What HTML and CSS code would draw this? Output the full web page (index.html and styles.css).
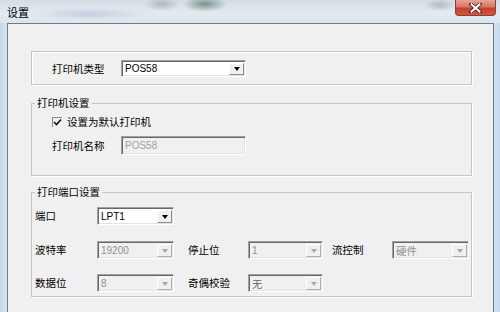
FILE: index.html
```html
<!DOCTYPE html>
<html lang="zh-CN">
<head>
<meta charset="utf-8">
<title>设置</title>
<link rel="stylesheet" href="styles.css">
</head>
<body>
<div class="window">
  <div class="titlebar">
    <div class="title">设置</div>
    <div class="close">
      <svg width="13" height="10" viewBox="0 0 13 10"><path d="M2 1 L11 9 M11 1 L2 9" stroke="#3a2a2a" stroke-width="3.6" stroke-linecap="square"/><path d="M2.5 1.5 L10.5 8.5 M10.5 1.5 L2.5 8.5" stroke="#ffffff" stroke-width="2" stroke-linecap="square"/></svg>
    </div>
  </div>
  <div class="client">
    <div class="group1">
      <span class="lbl w69">打印机类型</span>
      <div class="combo w125">
        <span class="val">POS58</span>
        <span class="btn"><i class="arrow"></i></span>
      </div>
    </div>

    <fieldset class="group g2">
      <legend>打印机设置</legend>
      <div class="row ind check-row">
        <span class="checkbox"><svg width="9" height="9" viewBox="0 0 9 9"><path d="M1 4 L3.5 6.5 L8 1.5" fill="none" stroke="#111" stroke-width="1.6"/></svg></span>
        <span class="lbl">设置为默认打印机</span>
      </div>
      <div class="row ind name-row">
        <span class="lbl w69">打印机名称</span>
        <div class="textbox w125 disabled"><span class="val">POS58</span></div>
      </div>
    </fieldset>

    <fieldset class="group g3">
      <legend>打印端口设置</legend>
      <div class="row r1">
        <span class="lbl w62">端口</span>
        <div class="combo w77">
          <span class="val">LPT1</span>
          <span class="btn"><i class="arrow"></i></span>
        </div>
      </div>
      <div class="row r2">
        <span class="lbl w62">波特率</span>
        <div class="combo w77 disabled">
          <span class="val">19200</span>
          <span class="btn"><i class="arrow"></i></span>
        </div>
        <span class="lbl w60 gap14">停止位</span>
        <div class="combo w75 disabled">
          <span class="val">1</span>
          <span class="btn"><i class="arrow"></i></span>
        </div>
        <span class="lbl w60 gap9">流控制</span>
        <div class="combo w77 disabled">
          <span class="val cjk">硬件</span>
          <span class="btn"><i class="arrow"></i></span>
        </div>
      </div>
      <div class="row r3">
        <span class="lbl w62">数据位</span>
        <div class="combo w77 disabled">
          <span class="val">8</span>
          <span class="btn"><i class="arrow"></i></span>
        </div>
        <span class="lbl w60 gap14">奇偶校验</span>
        <div class="combo w75 disabled">
          <span class="val cjk dark">无</span>
          <span class="btn"><i class="arrow"></i></span>
        </div>
      </div>
    </fieldset>
  </div>
</div>
</body>
</html>
```

FILE: styles.css
```css
html, body {
  margin: 0;
  padding: 0;
}
body {
  width: 500px;
  height: 312px;
  overflow: hidden;
  font-family: "Noto Sans CJK SC", "DejaVu Sans", sans-serif;
  font-size: 10.5px;
  color: #000;
}
.window {
  height: 312px;
  display: flex;
  flex-direction: column;
  background: linear-gradient(to right, #c4d8ec 0, #d6e4f1 7px, #d6e4f1 493px, #c4d8ec 500px);
}
.titlebar {
  height: 23px;
  flex: none;
  display: flex;
  justify-content: space-between;
  align-items: flex-start;
  background:
    radial-gradient(ellipse 22px 8px at 205px 4px, rgba(40,80,60,0.55), rgba(40,80,60,0)),
    radial-gradient(ellipse 18px 7px at 162px 4px, rgba(90,110,110,0.35), rgba(90,110,110,0)),
    radial-gradient(ellipse 60px 6px at 90px 14px, rgba(140,160,190,0.35), rgba(140,160,190,0)),
    radial-gradient(ellipse 16px 6px at 440px 5px, rgba(100,120,120,0.35), rgba(100,120,120,0)),
    linear-gradient(#d5dde4, #e3eaf0 60%, #dbe5ee);
}
.title {
  font-size: 11px;
  line-height: 14px;
  padding: 5px 0 0 7px;
  color: #000;
}
.close {
  width: 41px;
  height: 16px;
  margin-right: 4px;
  box-sizing: border-box;
  border: 1px solid #8e3b30;
  border-top: none;
  border-radius: 0 0 4px 4px;
  background: linear-gradient(#e7a394 0, #d77565 45%, #c2402f 55%, #d2573f 100%);
  display: flex;
  align-items: center;
  justify-content: center;
  padding-top: 1px;
}
.client {
  flex: 1;
  margin: 0 6px 0 7px;
  border: 1px solid #6c7b8a;
  border-bottom: none;
  background: #f0f0f0;
  padding: 27px 0 0 23px;
}
.group1 {
  width: 441px;
  box-sizing: border-box;
  border: 1px solid #c3c6c9;
  box-shadow: 1px 1px 0 #fff, inset 1px 1px 0 #fff;
  padding: 8px 0 7px 20px;
  display: flex;
  align-items: center;
}
.group {
  width: 441px;
  box-sizing: border-box;
  margin: 0;
  min-inline-size: 0;
  border: 1px solid #c3c6c9;
  box-shadow: 1px 1px 0 #fff;
  padding: 0 0 0 3px;
}
.group legend {
  padding: 0 2px;
  line-height: 14px;
  font-size: 10.5px;
}
.g2 {
  margin-top: 11px;
  padding-top: 4px;
  padding-bottom: 20px;
}
.g3 {
  margin-top: 9px;
  padding-top: 8px;
  padding-bottom: 4px;
}
.row {
  display: flex;
  align-items: center;
}
.ind {
  margin-left: 17px;
}
.check-row {
  height: 16px;
}
.name-row {
  margin-top: 6px;
}
.r2 {
  margin-top: 16px;
}
.r3 {
  margin-top: 15px;
}
.lbl {
  white-space: nowrap;
  line-height: 14px;
  flex: none;
}
.w60 { width: 60px; }
.w62 { width: 62px; }
.w69 { width: 69px; }
.gap14 { margin-left: 14px; }
.gap9 { margin-left: 9px; }
.w75 { width: 75px; }
.w77 { width: 77px; }
.w125 { width: 125px; }

.checkbox {
  width: 10px;
  height: 10px;
  box-sizing: border-box;
  border-left: 1px solid #8a8a8a;
  border-top: 1px solid #8a8a8a;
  margin-right: 5px;
  display: flex;
  align-items: center;
  justify-content: center;
}
.combo, .textbox {
  flex: none;
  display: flex;
  box-sizing: border-box;
  height: 18px;
  border: 1px solid;
  border-color: #a0a0a0 #ffffff #ffffff #a0a0a0;
  box-shadow: inset 1px 1px 0 #696969, inset -1px -1px 0 #e3e3e3;
  background: #fff;
}
.group1 .combo {
  height: 17px;
}
.textbox {
  height: 19px;
}
.val {
  flex: 1;
  padding-left: 3px;
  font-family: "Liberation Sans", Arial, sans-serif;
  font-size: 10px;
  display: flex;
  align-items: center;
  color: #000;
}
.val.cjk {
  font-family: "Noto Sans CJK SC", sans-serif;
  font-size: 10.5px;
}
.btn {
  width: 15px;
  margin: 2px 1px 1px 0;
  box-sizing: border-box;
  border: 1px solid;
  border-color: #ffffff #8a8a8a #8a8a8a #ffffff;
  background: #f0f0f0;
  display: flex;
  align-items: center;
  justify-content: center;
}
.arrow {
  width: 0;
  height: 0;
  border-left: 3.5px solid transparent;
  border-right: 3.5px solid transparent;
  border-top: 4px solid #000;
}
.disabled {
  background: #f0f0f0;
}
.disabled .val {
  color: #8f8f8f;
}
.disabled .val.dark {
  color: #6a6a6a;
}
.disabled .arrow {
  border-top-color: #a8a8a8;
}
.disabled .btn {
  border-color: #ffffff #b0b0b0 #b0b0b0 #ffffff;
}
.textbox.disabled .val {
  color: #a0a0a0;
}
```
